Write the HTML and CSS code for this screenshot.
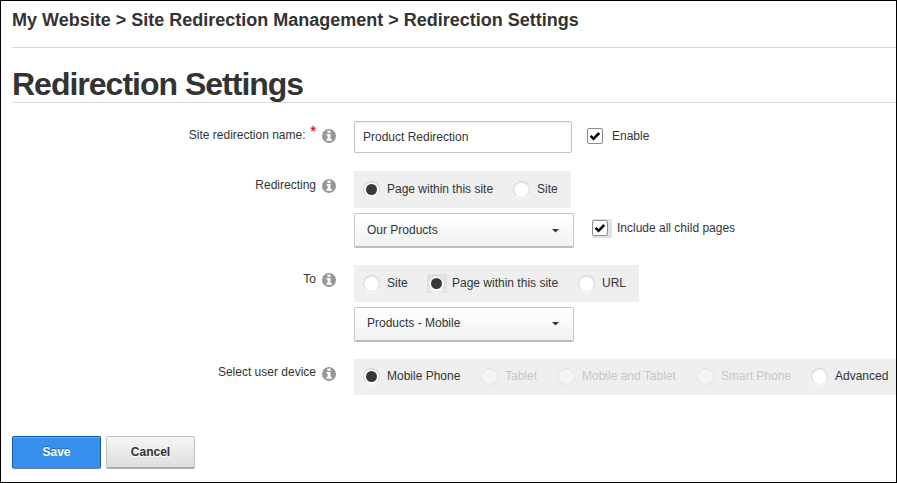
FILE: index.html
```html
<!DOCTYPE html>
<html lang="en">
<head>
<meta charset="utf-8">
<title>Redirection Settings</title>
<link rel="stylesheet" href="styles.css">
</head>
<body>
<svg class="defs" width="0" height="0">
  <symbol id="info" viewBox="0 0 14 14">
    <circle cx="7" cy="7" r="7" fill="#979797"/>
    <path d="M5.500 1.500h3v2.500h-3zM4.500 5h4v5h1.300v1.700H4.400V10h1.200V6.600H4.500z" fill="#fff"/>
  </symbol>
  <symbol id="check" viewBox="0 0 16 16">
    <path d="M3.600 7.900 L6.500 10.800 L12.200 5" fill="none" stroke="#000" stroke-width="2.500"/>
  </symbol>
</svg>
<main class="page">
  <nav class="breadcrumb">My Website &gt; Site Redirection Management &gt; Redirection Settings</nav>
  <h1 class="title">Redirection Settings</h1>
  <form class="form">
    <div class="row row-name">
      <div class="label"><span>Site redirection name:</span><span class="required">*</span><svg class="info"><use href="#info"/></svg></div>
      <div class="line">
        <div class="input">Product Redirection</div>
        <div class="check-item"><span class="checkbox"><svg><use href="#check"/></svg></span><span>Enable</span></div>
      </div>
    </div>
    <div class="row row-from">
      <div class="label"><span>Redirecting</span><svg class="info"><use href="#info"/></svg></div>
      <div class="controls">
        <div class="group">
          <div class="option"><i class="radio on"></i><span class="t-page">Page within this site</span></div>
          <div class="option"><i class="radio"></i><span class="t-site">Site</span></div>
        </div>
        <div class="line">
          <div class="select"><span>Our Products</span><svg class="caret" viewBox="0 0 7 4"><path d="M0 0h7L3.500 3.500z" fill="#333"/></svg></div>
          <div class="check-item child"><div class="focus-check"><span class="checkbox"><svg><use href="#check"/></svg></span></div><span>Include all child pages</span></div>
        </div>
      </div>
    </div>
    <div class="row row-to">
      <div class="label"><span>To</span><svg class="info"><use href="#info"/></svg></div>
      <div class="controls">
        <div class="group">
          <div class="option"><i class="radio"></i><span class="t-site">Site</span></div>
          <div class="option"><div class="focus-radio"><i class="radio on"></i></div><span class="t-page">Page within this site</span></div>
          <div class="option"><i class="radio"></i><span class="t-url">URL</span></div>
        </div>
        <div class="select"><span>Products - Mobile</span><svg class="caret" viewBox="0 0 7 4"><path d="M0 0h7L3.500 3.500z" fill="#333"/></svg></div>
      </div>
    </div>
    <div class="row row-device">
      <div class="label"><span>Select user device</span><svg class="info"><use href="#info"/></svg></div>
      <div class="group full">
        <div class="option"><i class="radio on"></i><span class="t-phone">Mobile Phone</span></div>
        <div class="option disabled"><i class="radio"></i><span class="t-tablet">Tablet</span></div>
        <div class="option disabled"><i class="radio"></i><span class="t-both">Mobile and Tablet</span></div>
        <div class="option disabled"><i class="radio"></i><span class="t-smart">Smart Phone</span></div>
        <div class="option"><i class="radio"></i><span>Advanced</span></div>
      </div>
    </div>
    <div class="actions">
      <button type="button" class="btn primary">Save</button>
      <button type="button" class="btn">Cancel</button>
    </div>
  </form>
</main>
</body>
</html>
```
FILE: styles.css
```css
* { box-sizing: border-box; }
body {
  margin: 0;
  background: #fff;
  color: #333;
  font: 12px/16px "Liberation Sans", Arial, sans-serif;
}
.defs { display: none; }
.page {
  width: 897px;
  height: 483px;
  border: 1px solid #000;
  padding-left: 11px;
  overflow: hidden;
}
.breadcrumb {
  height: 47px;
  padding-top: 8px;
  border-bottom: 1px solid #dadada;
  font-size: 18px;
  line-height: 22px;
  font-weight: bold;
  white-space: nowrap;
}
.title {
  height: 55px;
  margin: 0 0 18px;
  padding-top: 18px;
  border-bottom: 1px solid #dadada;
  font-size: 32px;
  line-height: 36px;
  letter-spacing: -1px;
}
.row {
  display: grid;
  grid-template-columns: 324px 1fr;
  column-gap: 18px;
  white-space: nowrap;
}
.row-name { height: 50px; }
.row-from, .row-to { height: 94px; }
.row-device { height: 77px; }
.label {
  display: flex;
  justify-content: flex-end;
  align-items: flex-start;
  padding-top: 6px;
}
.row-device .label { padding-top: 5px; }
.info {
  width: 14px;
  height: 14px;
  margin: 2px 0 0 6px;
}
.row-device .info { margin-top: 3px; }
.required {
  margin: -4px 0 0 5px;
  color: #f00000;
  font-size: 14px;
  -webkit-text-stroke: 0.3px #f00000;
}
.line { display: flex; }
.input {
  width: 218px;
  height: 32px;
  padding: 7px 8px;
  border: 1px solid #c3c3c3;
  border-radius: 2px;
  box-shadow: inset 0 1px 2px #eee;
}
.check-item {
  display: flex;
  gap: 9px;
  height: 16px;
  margin: 7px 0 0 15px;
}
.checkbox {
  display: block;
  width: 16px;
  height: 16px;
  border: 1px solid #8c8c8c;
  border-radius: 2px;
  background: #fff;
}
.checkbox svg {
  display: block;
  width: 16px;
  height: 16px;
  margin: -1px;
}
.focus-check {
  width: 20px;
  height: 19px;
  margin: -1px -4px 0 0;
  padding-top: 1px;
  background: #e2e2e2;
}
.child { margin: 7px 0 0 18px; }
.group {
  display: flex;
  gap: 20px;
  width: max-content;
  height: 37px;
  margin-bottom: 5px;
  padding: 10px 13px 0 9px;
  background: #efefef;
}
.group.full { width: auto; height: 36px; margin: 0; padding: 9px 0 0 9px; }
.option { display: flex; gap: 7px; }
.radio {
  display: flex;
  flex: none;
  width: 17px;
  height: 17px;
  border: 1px solid #d6d6d6;
  border-bottom-color: #e6e6e6;
  border-radius: 50%;
  background: #fff;
  box-shadow: inset 0 1px 1px #e5e5e5, 0 1px 0 #fff;
}
.radio.on::before {
  content: "";
  width: 11px;
  height: 11px;
  margin: 2px;
  border-radius: 50%;
  background: #383838;
}
.focus-radio {
  width: 20px;
  height: 19px;
  margin: -1px -2px 0 -1px;
  padding: 1px;
  background: #e2e2e2;
}
.option span { display: block; height: 16px; }
.disabled { color: #c8c8c8; }
.disabled .radio { background: #f4f4f4; border-color: #e2e2e2; box-shadow: none; }
.t-page { width: 106px; }
.t-site { width: 21px; }
.t-url { width: 24px; }
.t-phone { width: 74px; }
.t-tablet { width: 33px; }
.t-both { width: 95px; }
.t-smart { width: 70px; }
.select {
  display: flex;
  justify-content: space-between;
  width: 220px;
  height: 35px;
  padding: 8px 14px 0 12px;
  border: 1px solid #c4c4c4;
  border-bottom: 2px solid #bcbcbc;
  border-radius: 2px;
  background: linear-gradient(#fff, #f0f3f2);
}
.row-to .select { padding-top: 7px; }
.caret { width: 7px; height: 4px; margin-top: 7px; }
.actions { display: flex; gap: 5px; }
.btn {
  width: 89px;
  height: 33px;
  padding: 0 0 1px;
  border: 1px solid #c1c1c1;
  border-bottom: 2px solid #aaa;
  border-radius: 2px;
  background: linear-gradient(#f6f6f6, #dedede);
  color: #333;
  font: bold 12px/16px "Liberation Sans", Arial, sans-serif;
  text-shadow: 0 1px 0 #fff;
}
.btn.primary {
  border-color: #0f57a5;
  border-bottom-color: #65809d;
  background: #3790ee;
  box-shadow: inset 0 1px 0 #68b0fb;
  color: #fff;
  text-shadow: 0 -1px 0 #1c62b0;
}
```
